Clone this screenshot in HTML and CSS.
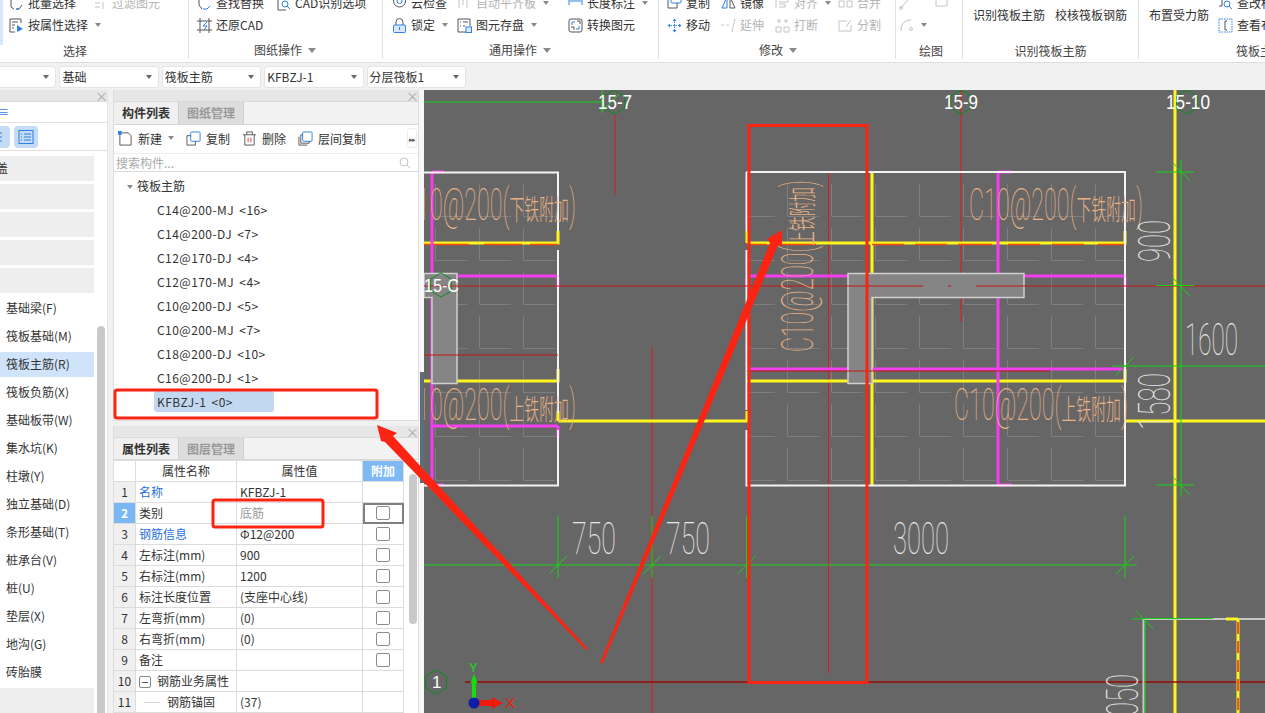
FILE: index.html
```html
<!DOCTYPE html>
<html lang="zh-CN">
<head>
  <meta charset="UTF-8" />
  <title>筏板主筋</title>
  <link rel="stylesheet" href="styles.css">
</head>
<body>
  <header class="ribbon">
    <section class="group group-select">
      <div class="group-rows">
        <div class="item"><svg class="ico" viewBox="0 0 15 15"><path d="M2 2v9l3 2M13 9l-3 4H7" class="ln-dark"/><path d="M7 13h3" class="ln-blue"/></svg>批量选择</div>
        <div class="item off"><svg class="ico" viewBox="0 0 15 15"><path d="M2 3h11M2 7h5M2 11h5M10 6v7" class="ln-gray"/></svg>过滤图元</div>
        <div class="item"><svg class="ico" viewBox="0 0 15 15"><path d="M12 5V1H1v13h5M3 4h6M3 7h3M3 10h2" class="ln-dark"/><path d="M8 7l6 4-6 3z" class="fill-blue"/></svg>按属性选择<i class="caret"></i></div>
      </div>
      <div class="group-label">选择</div>
    </section>
    <section class="group group-drawing">
      <div class="group-rows">
        <div class="item"><svg class="ico" viewBox="0 0 15 15"><path d="M2 1v8M2 9l3 4" class="ln-dark"/><path d="M6 13h4l3-3" class="ln-blue"/></svg>查找替换</div>
        <div class="item"><svg class="ico" viewBox="0 0 15 15"><path d="M2 1v13h8" class="ln-dark"/><circle cx="9" cy="8" r="3" class="ln-blue"/><path d="M11 10l3 3" class="ln-blue"/></svg>CAD识别选项</div>
        <div class="item"><svg class="ico" viewBox="0 0 15 15"><path d="M3 0v15M12 0v15M0 3h15M0 12h15" class="ln-dark"/><path d="M10 4L6 8h4l-3 4" class="ln-blue"/></svg>还原CAD</div>
      </div>
      <div class="group-label">图纸操作<i class="caret big"></i></div>
    </section>
    <section class="group group-common">
      <div class="group-rows">
        <div class="item"><svg class="ico" viewBox="0 0 15 15"><circle cx="7.5" cy="5" r="6" class="ln-dark"/><circle cx="7.5" cy="5" r="2.5" class="ln-blue"/></svg>云检查</div>
        <div class="item off"><svg class="ico" viewBox="0 0 15 15"><path d="M2 1v11M6 1v8M10 4v8" class="ln-gray"/></svg>自动平齐板<i class="caret"></i></div>
        <div class="item"><svg class="ico" viewBox="0 0 15 15"><path d="M1 0v9M14 0v9M2 5h11" class="ln-blue"/></svg>长度标注<i class="caret"></i></div>
        <div class="item"><svg class="ico" viewBox="0 0 15 15"><path d="M4 7V4a3.500 3.500 0 0 1 7 0v3" class="ln-dark"/><rect x="1.500" y="7" width="12" height="7.500" rx="1" class="box-blue"/><path d="M7.500 9v3" class="ln-blue"/></svg>锁定<i class="caret"></i></div>
        <div class="item"><svg class="ico" viewBox="0 0 15 15"><path d="M9 14H1V1h12v7M3 4h1M6 4h5M3 8h1M6 8h2" class="ln-dark"/><rect x="9" y="9" width="5.500" height="5.500" class="box-blue"/></svg>图元存盘<i class="caret"></i></div>
        <div class="item"><svg class="ico" viewBox="0 0 15 15"><rect x="1" y="1" width="13" height="13" rx="2" class="ln-dark"/><path d="M4 7V4h3M11 8v3H8" class="ln-blue"/><path d="M9 3h3v3M3 9h3v3" class="ln-dark"/></svg>转换图元</div>
      </div>
      <div class="group-label">通用操作<i class="caret big"></i></div>
    </section>
    <section class="group group-modify">
      <div class="group-rows">
        <div class="item"><svg class="ico" viewBox="0 0 15 15"><rect x="4" y="-3" width="10" height="10" rx="1" class="ln-blue"/><path d="M4 3H1v9h9V7" class="ln-dark"/></svg>复制</div>
        <div class="item"><svg class="ico" viewBox="0 0 15 15"><path d="M6 1L1 12h5z" class="ln-blue"/><path d="M9 1l5 11H9z" class="ln-dark"/></svg>镜像</div>
        <div class="item off"><svg class="ico" viewBox="0 0 15 15"><path d="M1 1v11M4 3h9v3H4M4 8h6v3H4" class="ln-gray"/></svg>对齐<i class="caret"></i></div>
        <div class="item off"><svg class="ico" viewBox="0 0 15 15"><path d="M1 5h5v6H1zM9 5h5v6H9z" class="ln-gray"/></svg>合并</div>
        <div class="item"><svg class="ico" viewBox="0 0 15 15"><path d="M7.500 1v13M1 7.500h13" class="ln-blue-dash"/><path d="M5.500 3l2-2.500 2 2.500zM5.500 12l2 2.500 2-2.500zM3 5.500L.5 7.500l2.500 2zM12 5.500l2.500 2-2.500 2z" class="fill-blue"/></svg>移动</div>
        <div class="item off"><svg class="ico" viewBox="0 0 15 15"><path d="M0 7h3M5 7h3M14 1l-3 13" class="ln-gray"/></svg>延伸</div>
        <div class="item off"><svg class="ico" viewBox="0 0 15 15"><path d="M3 2h2v2H3zM10 2h2v2h-2zM1 9h5v5H1zM9 9h5v5H9z" class="ln-gray"/></svg>打断</div>
        <div class="item off"><svg class="ico" viewBox="0 0 15 15"><path d="M9 3H1v10h12V7M8 9l5-7" class="ln-gray"/></svg>分割</div>
      </div>
      <div class="group-label">修改<i class="caret big"></i></div>
    </section>
    <section class="group group-draw">
      <div class="group-rows">
        <div class="item off"><svg class="ico" viewBox="0 0 15 15"><path d="M2 12L13-1" class="ln-gray"/><circle cx="2" cy="12" r="1.500" class="ln-gray"/></svg></div>
        <div class="item off"><svg class="ico" viewBox="0 0 15 15"><path d="M2-4v14h11V-4" class="ln-gray"/></svg></div>
        <div class="item off"><svg class="ico" viewBox="0 0 15 15"><path d="M2 13C2 5 6 2 12 2" class="ln-gray"/><circle cx="12" cy="11" r="1.500" class="ln-gray"/></svg><i class="caret"></i></div>
      </div>
      <div class="group-label">绘图</div>
    </section>
    <section class="group group-identify">
      <div class="group-tall">
        <div class="tall-item">识别筏板主筋</div>
        <div class="tall-item">校核筏板钢筋</div>
      </div>
      <div class="group-label">识别筏板主筋</div>
    </section>
    <section class="group group-raft">
      <div class="raft-body">
        <div class="tall-item">布置受力筋</div>
        <div class="raft-col">
          <div class="item"><svg class="ico" viewBox="0 0 15 15"><path d="M1 1h3v9H1" class="ln-dark"/><circle cx="9" cy="8" r="3" class="ln-blue"/><path d="M11 10l3 3" class="ln-blue"/></svg>查改标注</div>
          <div class="item"><svg class="ico" viewBox="0 0 15 15"><rect x="1" y="1" width="13" height="13" class="ln-blue-dash"/><path d="M9 3H7v9h2" class="ln-dark"/></svg>查看布筋</div>
        </div>
      </div>
      <div class="group-label raft-label">筏板主筋</div>
    </section>
  </header>

  <div class="selectbar">
    <div class="combo"><i class="caret"></i></div>
    <div class="combo">基础<i class="caret"></i></div>
    <div class="combo">筏板主筋<i class="caret"></i></div>
    <div class="combo">KFBZJ-1<i class="caret"></i></div>
    <div class="combo">分层筏板1<i class="caret"></i></div>
  </div>

  <main class="workspace">
    <aside class="nav-panel">
      <div class="panel-head"><span class="close">×</span></div>
      <div class="nav-top"><span class="nav-glyph">≡</span></div>
      <div class="nav-views">
        <span class="view-btn cut"><svg viewBox="0 0 16 16"><path d="M0 4h5M0 8h5M0 12h5" class="ln-blue"/></svg></span>
        <span class="view-btn"><svg viewBox="0 0 16 16"><rect x="1" y="1.500" width="14" height="13" class="ln-blue"/><path d="M3 5h1M6 5h7M3 8h1M6 8h7M3 11h1M6 11h7" class="ln-blue"/></svg></span>
      </div>
      <div class="nav-body">
        <ul class="nav-list">
          <li class="muted clip">盖</li>
          <li class="muted"></li>
          <li class="muted"></li>
          <li class="muted"></li>
          <li class="muted"></li>
          <li>基础梁(F)</li>
          <li>筏板基础(M)</li>
          <li class="active">筏板主筋(R)</li>
          <li>筏板负筋(X)</li>
          <li>基础板带(W)</li>
          <li>集水坑(K)</li>
          <li>柱墩(Y)</li>
          <li>独立基础(D)</li>
          <li>条形基础(T)</li>
          <li>桩承台(V)</li>
          <li>桩(U)</li>
          <li>垫层(X)</li>
          <li>地沟(G)</li>
          <li>砖胎膜</li>
          <li class="muted"></li>
        </ul>
        <div class="scroll nav-scroll"></div>
      </div>
    </aside>

    <div class="mid-column">
      <section class="panel list-panel">
        <div class="panel-head"><span class="close">×</span></div>
        <div class="tabs"><span class="tab on">构件列表</span><span class="tab">图纸管理</span></div>
        <div class="toolbar">
          <span class="tool"><svg class="tool-ico" viewBox="0 0 16 16"><path d="M4 2h7l3 3v10H2V3" class="ln-dark"/><path d="M0 0h4v4H0z" class="fill-blue"/></svg>新建<i class="caret"></i></span>
          <span class="tool"><svg class="tool-ico" viewBox="0 0 16 16"><rect x="5" y="1" width="10" height="10" rx="1" class="ln-blue"/><path d="M5 5H1v10h9v-4" class="ln-dark"/></svg>复制</span>
          <span class="tool"><svg class="tool-ico" viewBox="0 0 16 16"><path d="M1 4h14M5 4V1h6v3M3 4v11h10V4" class="ln-dark"/><path d="M6.500 7v5M9.500 7v5" class="ln-red"/></svg>删除</span>
          <span class="tool"><svg class="tool-ico" viewBox="0 0 16 16"><rect x="5" y="1" width="10" height="10" rx="1" class="ln-blue"/><path d="M5 4H3v9h9v-2M1 6v9h9" class="ln-dark"/></svg>层间复制</span>
          <span class="more">▸▸</span>
        </div>
        <div class="search">搜索构件...<svg class="search-ico" viewBox="0 0 12 12"><circle cx="5" cy="5" r="4" class="ln-gray"/><path d="M8 8l3 3" class="ln-gray"/></svg></div>
        <div class="tree">
          <div class="tree-root"><i class="caret"></i>筏板主筋</div>
          <div class="tree-leaf">C14@200-MJ &lt;16&gt;</div>
          <div class="tree-leaf">C14@200-DJ &lt;7&gt;</div>
          <div class="tree-leaf">C12@170-DJ &lt;4&gt;</div>
          <div class="tree-leaf">C12@170-MJ &lt;4&gt;</div>
          <div class="tree-leaf">C10@200-DJ &lt;5&gt;</div>
          <div class="tree-leaf">C10@200-MJ &lt;7&gt;</div>
          <div class="tree-leaf">C18@200-DJ &lt;10&gt;</div>
          <div class="tree-leaf">C16@200-DJ &lt;1&gt;</div>
          <div class="tree-leaf"><span class="picked">KFBZJ-1 &lt;0&gt;</span></div>
        </div>
      </section>
      <section class="panel prop-panel">
        <div class="panel-head"><span class="close">×</span></div>
        <div class="tabs"><span class="tab on">属性列表</span><span class="tab">图层管理</span></div>
        <div class="prop-body">
          <table class="props">
            <colgroup><col class="c-num"><col class="c-name"><col class="c-val"><col class="c-add"></colgroup>
            <tr><th></th><th>属性名称</th><th>属性值</th><th class="add-head">附加</th></tr>
            <tr><td class="num">1</td><td class="link">名称</td><td>KFBZJ-1</td><td></td></tr>
            <tr><td class="num sel">2</td><td>类别</td><td class="dim">底筋</td><td class="chk focus"><i></i></td></tr>
            <tr><td class="num">3</td><td class="link">钢筋信息</td><td>Φ12@200</td><td class="chk"><i></i></td></tr>
            <tr><td class="num">4</td><td>左标注(mm)</td><td>900</td><td class="chk"><i></i></td></tr>
            <tr><td class="num">5</td><td>右标注(mm)</td><td>1200</td><td class="chk"><i></i></td></tr>
            <tr><td class="num">6</td><td>标注长度位置</td><td>(支座中心线)</td><td class="chk"><i></i></td></tr>
            <tr><td class="num">7</td><td>左弯折(mm)</td><td>(0)</td><td class="chk"><i></i></td></tr>
            <tr><td class="num">8</td><td>右弯折(mm)</td><td>(0)</td><td class="chk"><i></i></td></tr>
            <tr><td class="num">9</td><td>备注</td><td></td><td class="chk"><i></i></td></tr>
            <tr><td class="num">10</td><td><span class="fold">−</span>钢筋业务属性</td><td></td><td></td></tr>
            <tr><td class="num">11</td><td class="child">钢筋锚固</td><td>(37)</td><td></td></tr>
          </table>
          <div class="scroll prop-scroll"></div>
        </div>
      </section>
    </div>

    <div class="splitter"><div class="splitter-thumb"></div></div>

    <svg class="cad" viewBox="424 90 841 623">
      <defs>
        <pattern id="rebar-grid" x="435" y="184" width="44" height="44" patternUnits="userSpaceOnUse">
          <path d="M.5 0v32.500H32" fill="none" stroke="#7e7e7e"/>
        </pattern>
        <polygon id="axis-mark" points="0,-12 10.400,-6 10.400,6 0,12 -10.400,6 -10.400,-6" fill="none" stroke="#0c8a1c"/>
        <path id="tick" d="M-9 9L9-9" stroke="#14d414" fill="none"/>
      </defs>

      <rect x="424" y="172" width="134" height="313" fill="url(#rebar-grid)"/>
      <rect x="747" y="172" width="378" height="313" fill="url(#rebar-grid)"/>

      <g class="cad-red">
        <path d="M615 115v80M961 90v232M652 347v366M828.500 172v501"/>
      </g>

      <g class="cad-yellow">
        <path d="M424 243h134v-12M747 231v12M747 243h378v-12"/>
        <path d="M424 381h134v-12M747 381h378v-12M872 172v313"/>
        <path d="M558 421V411M558 421h189v-10M1125 421h140"/>
        <path d="M1175 90v623"/>
      </g>
      <path d="M424 244.500h45M484 244.500h38M530 244.500h28M747 244.500h20M776 244.500h40M872 244.500h32M915 244.500h32M958 244.500h34M1008 244.500h32M1052 244.500h32M1098 244.500h27" class="cad-dash"/>

      <g class="cad-magenta">
        <path d="M432 172v313M432 172h12M432 485h12"/>
        <path d="M457 276h101M432 426h126M747 276h101M1024 276h101M747 369h378"/>
        <path d="M998 172v313M998 172h14M998 485h14"/>
        <path d="M558 276v12M747 276v12M1125 276v12M558 426v12"/>
      </g>

      <g class="cad-white">
        <path d="M424 172.500h134V231M558 250v163M558 430v55.500H424"/>
        <path d="M746.500 172v59M746.500 250v160M746.500 430v55.500H1125V172H746.500"/>
      </g>

      <path d="M848 273.500h176v24H872v86h-24zM424 273.500h33v110h-25v-86h-8z" class="cad-slab"/>

      <g class="cad-darkred">
        <path d="M424 286h499M948 286h3M976 286h289"/>
        <path d="M424 355h134M747 371h303"/>
      </g>
      <path d="M465 682h800" class="cad-maroon"/>

      <g class="cad-green">
        <path d="M424 102h178M602 90v23"/>
        <path d="M1181 160v337M1156 172h38M1156 285.500h38M1112 366h153M1156 485h38"/>
        <path d="M424 565h713M558 516v62M652 516v62M746.500 516v62M1125 516v62"/>
        <path d="M1132 619h12"/>
      </g>
      <path d="M1144 619h82M1238 619h27M1143.500 619v94" class="cad-white-thin"/>
      <path d="M1145 620v93M1144 618.500h69" class="cad-green"/>
      <path d="M1226 619h12" class="cad-yellow"/>
      <path d="M1238 619v94" class="cad-yellow"/>
      <path d="M1238 622v94" class="cad-redash"/>
      <use href="#tick" x="558" y="565"/><use href="#tick" x="652" y="565"/><use href="#tick" x="746.500" y="565"/><use href="#tick" x="1125" y="565"/>
      <use href="#tick" x="1125" y="366"/>
      <path d="M1173 163l17 18M1173 278l17 18M1173 477l17 18M1136 611l17 18" stroke="#14d414" fill="none"/>
      <path d="M601 112l18-18" stroke="#14d414" fill="none"/>

      <use href="#axis-mark" x="614" y="102"/>
      <use href="#axis-mark" x="961" y="102"/>
      <use href="#axis-mark" x="1187" y="102"/>
      <use href="#axis-mark" x="441" y="285"/>
      <use href="#axis-mark" x="436" y="682"/>

      <text x="598" y="109" font-size="20" textLength="34" lengthAdjust="spacingAndGlyphs" class="cad-axis">15-7</text>
      <text x="944" y="109" font-size="20" textLength="34" lengthAdjust="spacingAndGlyphs" class="cad-axis">15-9</text>
      <text x="1166" y="109" font-size="20" textLength="44" lengthAdjust="spacingAndGlyphs" class="cad-axis">15-10</text>
      <text x="424" y="292" font-size="18" textLength="35" lengthAdjust="spacingAndGlyphs" class="cad-axis">15-C</text>
      <text x="432" y="688" font-size="17" class="cad-axis">1</text>

      <text x="402" y="220" font-size="44" textLength="174" lengthAdjust="spacingAndGlyphs" class="cad-note">C10@200(<tspan class="cad-cjk">下铁附加</tspan>)</text>
      <text x="402" y="420" font-size="44" textLength="174" lengthAdjust="spacingAndGlyphs" class="cad-note">C10@200(<tspan class="cad-cjk">上铁附加</tspan>)</text>
      <text x="969" y="220" font-size="44" textLength="174" lengthAdjust="spacingAndGlyphs" class="cad-note">C10@200(<tspan class="cad-cjk">下铁附加</tspan>)</text>
      <text x="954" y="420" font-size="44" textLength="174" lengthAdjust="spacingAndGlyphs" class="cad-note">C10@200(<tspan class="cad-cjk">上铁附加</tspan>)</text>
      <text transform="translate(813 352) rotate(-90)" font-size="44" textLength="172" lengthAdjust="spacingAndGlyphs" class="cad-note">C10@200(<tspan class="cad-cjk">上铁附加</tspan>)</text>

      <text x="572" y="554" font-size="44" textLength="44" lengthAdjust="spacingAndGlyphs" class="cad-dim">750</text>
      <text x="666" y="554" font-size="44" textLength="44" lengthAdjust="spacingAndGlyphs" class="cad-dim">750</text>
      <text x="893" y="554" font-size="44" textLength="56" lengthAdjust="spacingAndGlyphs" class="cad-dim">3000</text>
      <text x="1185" y="355" font-size="44" textLength="53" lengthAdjust="spacingAndGlyphs" class="cad-dim">1600</text>
      <text transform="translate(1170 262) rotate(-90)" font-size="44" textLength="42" lengthAdjust="spacingAndGlyphs" class="cad-dim">900</text>
      <text transform="translate(1170 430) rotate(-90)" font-size="44" textLength="57" lengthAdjust="spacingAndGlyphs" class="cad-dim">1580</text>
      <text transform="translate(1138 730) rotate(-90)" font-size="44" textLength="56" lengthAdjust="spacingAndGlyphs" class="cad-dim">1050</text>

      <text x="469" y="672" font-size="13" class="axis-y">Y</text>
      <text x="505" y="708" font-size="15" class="axis-x">X</text>
      <path d="M474 700v-17h-1.500l3.500-9 3.500 9H478v17z" transform="translate(-2 0)" fill="#10e010"/>
      <path d="M476 700h16v-3l11 6-11 6v-3h-16z" fill="#f01a0a"/>
      <circle cx="474" cy="703" r="5.500" fill="#0a1fa8"/>
    </svg>

    <svg class="annotations" viewBox="0 90 1265 623">
      <rect x="749" y="125.500" width="118" height="557" class="mark-box"/>
      <rect x="115" y="390" width="262" height="28" rx="2" class="mark-box"/>
      <rect x="213" y="500" width="110" height="27" rx="2" class="mark-box"/>
      <polygon points="600,663 770,243 767,239 782,230 782,246 778,245 603,663" class="mark-fill"/>
      <polygon points="588,649 393,436 397,433 377,425 381,441 385,442 586,650" class="mark-fill"/>
    </svg>
  </main>
</body>
</html>
```

FILE: styles.css
```css
:root {
  --ui-font: "Noto Sans CJK SC", "Noto Sans", sans-serif;
  --line: #dcdcdc;
  --text: #333333;
  --off: #b4b4b4;
  --blue: #2f80e4;
  --panel-head: #e6e6e6;
}

* {
  box-sizing: border-box;
}

html, body {
  margin: 0;
  height: 713px;
  overflow: hidden;
}

body {
  font-family: var(--ui-font);
  font-size: 12px;
  color: var(--text);
  background: #f1f1f1;
}

/* ribbon */
.ribbon {
  display: flex;
  height: 63px;
  background: #fff;
  border-bottom: 1px solid #dedede;
  overflow: hidden;
}

.group {
  height: 59px;
  border-right: 1px solid #e2e2e2;
  flex: none;
}

.group-rows {
  display: grid;
  grid-auto-rows: 22px;
  margin-top: -8px;
  height: 49px;
}

.group-select {
  width: 189px;
  padding-left: 9px;
  background: linear-gradient(#d6e7fb, #d6e7fb) 0 0 / 3px 45px no-repeat;
}
.group-select .group-rows { grid-template-columns: 84px 90px; }
.group-drawing { width: 194px; padding-left: 8px; }
.group-drawing .group-rows { grid-template-columns: 79px 100px; }
.group-common { width: 276px; padding-left: 9px; }
.group-common .group-rows { grid-template-columns: 65px 111px 90px; }
.group-modify { width: 237px; padding-left: 8px; }
.group-modify .group-rows { grid-template-columns: 54px 54px 63px 50px; }
.group-draw { width: 67px; padding-left: 3px; }
.group-draw .group-rows { grid-template-columns: 35px 25px; }
.group-identify { width: 176px; }
.group-raft { flex: 1; border-right: 0; }

.item {
  display: flex;
  align-items: center;
  gap: 4px;
  white-space: nowrap;
  line-height: 22px;
}

.item.off {
  color: var(--off);
}

.ico {
  width: 15px;
  height: 15px;
  flex: none;
  overflow: visible;
}

.caret {
  display: inline-block;
  width: 0;
  height: 0;
  border-left: 3px solid transparent;
  border-right: 3px solid transparent;
  border-top: 4px solid #8a8a8a;
}

.item .caret {
  margin-left: 3px;
}

.caret.big {
  margin-left: 6px;
  border-left-width: 4px;
  border-right-width: 4px;
  border-top-width: 5px;
}

.group-label {
  height: 18px;
  line-height: 18px;
  text-align: center;
  color: #444;
  display: flex;
  align-items: center;
  justify-content: center;
}

.group-select .group-label { width: 132px; margin-top: 1px; }
.group-drawing .group-label { width: 176px; }
.group-common .group-label { width: 256px; }
.group-modify .group-label { width: 222px; }
.group-draw .group-label { width: 64px; margin-top: 1px; }

.group-tall {
  display: flex;
  gap: 10px;
  height: 42px;
  padding: 6px 0 0 10px;
}

.tall-item {
  line-height: 18px;
  white-space: nowrap;
}

.raft-body {
  display: flex;
  height: 42px;
  padding: 0 0 0 10px;
}

.raft-body .tall-item {
  padding-top: 6px;
  width: 69px;
}

.raft-col {
  margin-top: -8px;
  display: grid;
  grid-auto-rows: 22px;
}

.raft-label {
  margin-left: 97px;
  justify-content: flex-start;
}

/* svg strokes */
.ln-dark, .ln-blue, .ln-gray, .ln-red, .ln-blue-dash {
  fill: none;
  stroke-width: 1;
}
.ln-dark { stroke: #555; }
.ln-blue { stroke: var(--blue); }
.ln-gray { stroke: #c4c4c4; }
.ln-red { stroke: #d23c3c; }
.ln-blue-dash { stroke: var(--blue); stroke-dasharray: 1.500 1; }
.fill-blue { fill: var(--blue); }
.box-blue { fill: #d9e9fb; stroke: var(--blue); }

/* combos */
.selectbar {
  display: flex;
  gap: 3px;
  height: 27px;
  padding-top: 3px;
  margin-left: -43px;
}

.combo {
  position: relative;
  width: 99.400px;
  height: 22px;
  line-height: 19px;
  padding-left: 2px;
  background: #fff;
  border: 1px solid #e4e4e4;
  border-radius: 3px;
}

.combo .caret {
  position: absolute;
  right: 6px;
  top: 8px;
  border-top-color: #666;
}

/* panels */
.workspace {
  position: relative;
  display: flex;
  height: 623px;
  overflow: hidden;
}

.panel-head {
  height: 12px;
  background: var(--panel-head);
  position: relative;
  border-bottom: 1px solid #dadada;
}

.close {
  position: absolute;
  right: -1px;
  top: -1px;
  line-height: 13px;
  font-size: 13px;
  color: #a8a8a8;
}

.nav-panel {
  width: 108px;
  background: #fff;
  flex: none;
  border-right: 1px solid #e4e4e4;
}

.nav-top {
  height: 21px;
  line-height: 20px;
  border-bottom: 1px solid #e0e0e0;
  overflow: hidden;
}

.nav-glyph {
  display: block;
  margin-left: -3px;
  color: var(--blue);
}

.nav-views {
  display: flex;
  gap: 4px;
  height: 28px;
  padding-top: 3px;
  border-bottom: 1px solid #e0e0e0;
}

.view-btn {
  width: 24px;
  height: 22px;
  border-radius: 4px;
  background: #c4dcf6;
  display: flex;
  align-items: center;
  justify-content: center;
}

.view-btn.cut {
  width: 10px;
  border-radius: 0 4px 4px 0;
}

.view-btn svg {
  width: 16px;
  height: 16px;
  flex: none;
}

.nav-body {
  display: flex;
}

.nav-list {
  list-style: none;
  margin: 0;
  padding: 5px 0 0;
  width: 94px;
}

.nav-list li {
  height: 25px;
  line-height: 23px;
  margin-bottom: 3px;
  padding-left: 6px;
  white-space: nowrap;
}

.nav-list .muted {
  background: #eeeeee;
}

.nav-list .clip {
  padding-left: 0;
  text-indent: -4px;
  overflow: hidden;
}

.nav-list .active {
  background: #cfe3fa;
}

.scroll {
  width: 8px;
  background: #c9c9c9;
  border-radius: 4px;
}

.nav-scroll {
  margin: 175px 0 0 3px;
  height: 420px;
}

.mid-column {
  width: 306px;
  margin-left: 5px;
  flex: none;
  display: flex;
  flex-direction: column;
  gap: 5px;
}

.panel {
  background: #fff;
  border-left: 1px solid var(--line);
  border-right: 1px solid var(--line);
}

.list-panel {
  height: 332px;
  border-bottom: 1px solid var(--line);
}

.prop-panel {
  flex: 1;
}

.tabs {
  display: flex;
  height: 23px;
  background: #f2f2f2;
  border-bottom: 1px solid #d8d8d8;
}

.prop-panel .tabs {
  height: 22px;
}

.tab {
  width: 65px;
  line-height: 22px;
  text-align: center;
  font-weight: bold;
  color: #999;
  background: #dddddd;
  border-right: 1px solid #cfcfcf;
}

.tab.on {
  color: #333;
  background: #f0f0f0;
}

.toolbar {
  position: relative;
  display: flex;
  align-items: center;
  height: 28px;
  padding: 0 0 2px 4px;
  gap: 12px;
}

.tool {
  display: flex;
  align-items: center;
  gap: 5px;
  white-space: nowrap;
}

.tool .caret {
  margin-left: 1px;
}

.tool-ico {
  width: 15px;
  height: 15px;
  overflow: visible;
}

.more {
  position: absolute;
  right: 1px;
  top: 3px;
  width: 10px;
  height: 20px;
  line-height: 20px;
  font-size: 7px;
  text-align: center;
  letter-spacing: -1px;
  color: #555;
  border: 1px solid #eeeeee;
  border-radius: 3px;
  overflow: hidden;
}

.search {
  display: flex;
  align-items: center;
  justify-content: space-between;
  height: 19px;
  padding: 0 7px 0 2px;
  color: #aaa;
  border-bottom: 1px solid var(--line);
  border-top: 1px solid #eeeeee;
}

.search-ico {
  width: 12px;
  height: 12px;
}

.tree {
  padding-top: 2px;
}

.tree-root {
  height: 24px;
  line-height: 24px;
  padding-left: 13px;
}

.tree-root .caret {
  margin-right: 4px;
  vertical-align: 2px;
}

.tree-leaf {
  height: 24px;
  line-height: 24px;
  padding-left: 43px;
  letter-spacing: 0.45px;
  word-spacing: 2px;
}

.picked {
  display: inline-block;
  width: 120px;
  height: 21px;
  line-height: 21px;
  margin: 1px 0 0 -3px;
  padding-left: 3px;
  background: #c2d8f0;
  border-radius: 3px;
}

/* property table */
.prop-body {
  display: flex;
}

.props {
  width: 290px;
  margin-left: -1px;
  table-layout: fixed;
  border-collapse: collapse;
  flex: none;
}

.c-num { width: 22px; }
.c-name { width: 101px; }
.c-val { width: 126px; }
.c-add { width: 41px; }

.props th, .props td {
  height: 21px;
  padding: 0 0 0 3px;
  border: 1px solid var(--line);
  font-weight: normal;
  white-space: nowrap;
  line-height: 18px;
  overflow: hidden;
}

.props th {
  padding: 0;
  text-align: center;
}

.props .add-head {
  background: #7db9f5;
  color: #fff;
  font-weight: bold;
}

.props .num {
  padding: 0;
  text-align: center;
  background: #f0f0f0;
}

.props .num.sel {
  background: #7ab8f5;
  color: #fff;
  font-weight: bold;
}

.props .link {
  color: #1f6fdc;
}

.props .dim {
  color: #9a9a9a;
}

.props .chk {
  padding: 0;
  text-align: center;
}

.props .chk i {
  display: block;
  width: 14px;
  height: 14px;
  margin: 0 auto;
  border: 1px solid #8c8c8c;
  border-radius: 2px;
}

.props .focus {
  outline: 2px solid #808080;
  outline-offset: -2px;
}

.fold {
  display: inline-block;
  width: 12px;
  height: 12px;
  line-height: 10px;
  margin-right: 6px;
  text-align: center;
  border: 1px solid #888;
  border-radius: 2px;
  vertical-align: -1px;
}

.props .child {
  padding-left: 31px;
  background: linear-gradient(#d4d4d4, #d4d4d4) 8px 10px / 16px 1px no-repeat;
}

.prop-scroll {
  margin: 14px 0 0 5px;
  height: 150px;
}

.splitter {
  width: 5px;
  margin-left: 0;
  padding: 282px 0 0 1px;
  background: #f8f8f8;
  flex: none;
}

.splitter-thumb {
  height: 111px;
  background: #5e6c7c;
}

/* drawing */
.cad {
  flex: 1;
  height: 623px;
  background: #666666;
  display: block;
}

.cad-red path { fill: none; stroke: #e01818; }
.cad-yellow { fill: none; stroke: #fdf51c; stroke-width: 3; }
.cad-yellow path { fill: none; }
.cad-dash { fill: none; stroke: #f04a10; stroke-width: 1.500; }
.cad-magenta { fill: none; stroke: #f43cf0; stroke-width: 3; }
.cad-white { fill: none; stroke: #f4f4f4; stroke-width: 2; }
.cad-white-thin { fill: none; stroke: #c8c8c8; stroke-width: 2; }
.cad-slab { fill: #858585; stroke: #d0d0d0; stroke-width: 1.500; }
.cad-darkred { fill: none; stroke: #cc1212; }
.cad-maroon { fill: none; stroke: #9c0808; stroke-width: 1.500; }
.cad-green { fill: none; stroke: #14d414; }
.cad-redash { fill: none; stroke: #f02010; stroke-width: 1.500; stroke-dasharray: 12 7; }

.cad-axis {
  fill: #ffffff;
  font-family: "Liberation Sans", sans-serif;
}

.cad-note {
  fill: #e8b284;
  font-family: Roboto, "Noto Sans CJK SC", sans-serif;
  font-weight: 100;
}

.cad-cjk {
  font-size: 28px;
  font-family: "Noto Sans CJK SC", sans-serif;
  font-weight: 300;
}

.cad-dim {
  fill: #e8e8e8;
  font-family: Roboto, sans-serif;
  font-weight: 100;
}

.axis-y {
  fill: #10e010;
  font-family: "Liberation Sans", sans-serif;
}

.axis-x {
  fill: #f01a0a;
  font-family: "Liberation Sans", sans-serif;
}

/* red marks drawn over the shot */
.annotations {
  position: absolute;
  left: 0;
  top: 0;
  width: 1265px;
  height: 623px;
  pointer-events: none;
}

.mark-box {
  fill: none;
  stroke: #fb2412;
  stroke-width: 3;
}

.mark-fill {
  fill: #fb2412;
}
```
